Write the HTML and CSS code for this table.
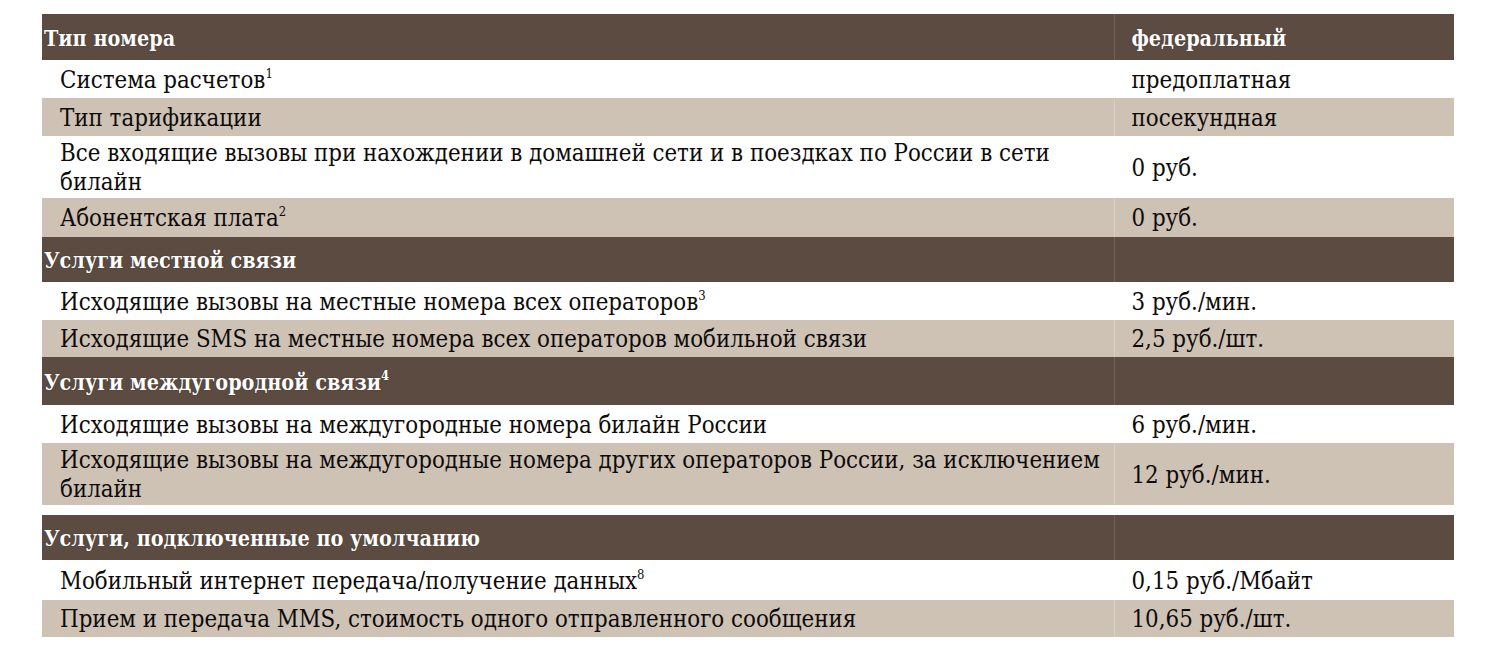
FILE: index.html
```html
<!DOCTYPE html>
<html lang="ru">
<head>
<meta charset="utf-8">
<link rel="stylesheet" href="styles.css">
</head>
<body>
<table class="tariff">
  <colgroup><col class="c1"><col class="c2"></colgroup>
  <tr class="head h46"><td>Тип номера</td><td>федеральный</td></tr>
  <tr class="white h38"><td>Система расчетов<sup>1</sup></td><td>предоплатная</td></tr>
  <tr class="beige h38"><td>Тип тарификации</td><td>посекундная</td></tr>
  <tr class="white h62"><td>Все входящие вызовы при нахождении в домашней сети и в поездках по России в сети билайн</td><td>0 руб.</td></tr>
  <tr class="beige h39"><td>Абонентская плата<sup>2</sup></td><td>0 руб.</td></tr>
  <tr class="head h45"><td>Услуги местной связи</td><td></td></tr>
  <tr class="white h38"><td>Исходящие вызовы на местные номера всех операторов<sup>3</sup></td><td>3 руб./мин.</td></tr>
  <tr class="beige h37"><td>Исходящие SMS на местные номера всех операторов мобильной связи</td><td>2,5 руб./шт.</td></tr>
  <tr class="head h48"><td>Услуги междугородной связи<sup>4</sup></td><td></td></tr>
  <tr class="white h38"><td>Исходящие вызовы на междугородные номера билайн России</td><td>6 руб./мин.</td></tr>
  <tr class="beige h62"><td>Исходящие вызовы на междугородные номера других операторов России, за исключением билайн</td><td>12 руб./мин.</td></tr>
  <tr class="gap"><td></td><td></td></tr>
  <tr class="head h45"><td>Услуги, подключенные по умолчанию</td><td></td></tr>
  <tr class="white h40"><td>Мобильный интернет передача/получение данных<sup>8</sup></td><td>0,15 руб./Мбайт</td></tr>
  <tr class="beige h37"><td>Прием и передача MMS, стоимость одного отправленного сообщения</td><td>10,65 руб./шт.</td></tr>
</table>
</body>
</html>
```
FILE: styles.css
```css
html, body {
  margin: 0;
  padding: 0;
  background: #ffffff;
}
body {
  padding: 14px 0 0 42px;
  font-family: "DejaVu Serif Condensed", "DejaVu Serif", "Liberation Serif", serif;
  font-stretch: condensed;
  font-size: 23.8px;
  color: #0d0b0a;
}
.tariff {
  border-collapse: collapse;
  width: 1412px;
  table-layout: fixed;
}
.c1 { width: 1072px; }
.c2 { width: 340px; }
.tariff td {
  box-sizing: border-box;
  padding: 2px 0 0 18px;
  vertical-align: middle;
  line-height: 29px;
}
.tariff td + td {
  padding-left: 17px;
  border-left: 1px solid rgba(255, 255, 255, 0.22);
}
.head td {
  background: #5c4b40;
  color: #ffffff;
  font-weight: bold;
  font-size: 21.4px;
  padding-left: 2px;
  text-shadow: 0 0 1px rgba(0, 0, 0, 0.6);
}
.head td + td { padding-left: 17px; border-left-color: rgba(255,255,255,0.12); }
.beige td { background: #cec2b5; }
.white td { background: #ffffff; }
.gap td { height: 10px; padding: 0; background: #ffffff; border-left-color: transparent; }
.h37 td { height: 37px; }
.h38 td { height: 38px; }
.h39 td { height: 39px; }
.h40 td { height: 40px; }
.h45 td { height: 45px; }
.h46 td { height: 46px; }
.h48 td { height: 48px; }
.h62 td { height: 62px; }
sup {
  font-size: 13px;
  line-height: 0;
  vertical-align: 10px;
}
```
